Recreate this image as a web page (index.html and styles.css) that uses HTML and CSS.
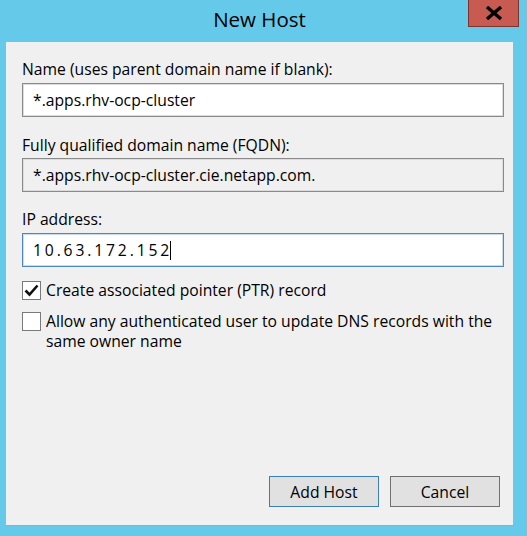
FILE: index.html
```html
<!DOCTYPE html>
<html>
<head>
<meta charset="utf-8">
<link rel="stylesheet" href="styles.css">
</head>
<body>
<div class="window">
  <div class="titlebar">
    <div class="title">New Host</div>
    <div class="close">
      <svg width="20" height="14" viewBox="0 0 20 14"><path d="M3 1 L17 13 M17 1 L3 13" stroke="#000" stroke-width="3.4" fill="none"/></svg>
    </div>
  </div>
  <div class="client">
    <div class="label l1">Name (uses parent domain name if blank):</div>
    <div class="input">*.apps.rhv-ocp-cluster</div>
    <div class="label l2">Fully qualified domain name (FQDN):</div>
    <div class="input readonly">*.apps.rhv-ocp-cluster.cie.netapp.com.</div>
    <div class="label l3">IP address:</div>
    <div class="input focused"><span class="ip">10.63.172.152</span><span class="caret"></span></div>
    <div class="check c1">
      <span class="box"><svg width="15" height="13" viewBox="0 0 15 13"><path d="M1.5 6.5 L5.5 10.5 L13.5 1.5" stroke="#111" stroke-width="2.6" fill="none"/></svg></span>
      <span class="ctext">Create associated pointer (PTR) record</span>
    </div>
    <div class="check c2">
      <span class="box"></span>
      <span class="ctext">Allow any authenticated user to update DNS records with the<br>same owner name</span>
    </div>
    <div class="buttons">
      <div class="btn default">Add Host</div>
      <div class="btn">Cancel</div>
    </div>
  </div>
</div>
</body>
</html>
```
FILE: styles.css
```css
html, body {
  margin: 0;
  padding: 0;
  width: 527px;
  height: 536px;
  overflow: hidden;
  background: #65c9ea;
  font-family: "Open Sans", "Noto Sans", sans-serif;
  color: #000;
}
.window {
  display: flex;
  flex-direction: column;
  height: 536px;
}
.titlebar {
  position: relative;
  height: 42px;
  display: flex;
  justify-content: center;
}
.title {
  font-size: 20.5px;
  line-height: 20px;
  margin-top: 9px;
  margin-left: -8px;
  color: #000;
}
.close {
  position: absolute;
  left: 468px;
  top: 0;
  width: 49px;
  height: 26px;
  background: #c75a51;
  border: 1px solid #7a3530;
  border-top: none;
  display: flex;
  align-items: center;
  justify-content: center;
}
.client {
  margin: 0 14px 0 6px;
  height: 483px;
  background: #f0f0f0;
  box-shadow: 0 1px 0 #a8a8a8;
  padding: 0 9px 0 16px;
  display: flex;
  flex-direction: column;
  font-size: 15.7px;
}
.label {
  line-height: 20px;
  height: 20px;
}
.l1 { margin-top: 17px; margin-bottom: 4px; }
.l2 { margin-top: 18px; margin-bottom: 3px; }
.l3 { margin-top: 17px; margin-bottom: 4px; }
.input {
  height: 32px;
  border: 1px solid #8a8a8a;
  box-shadow: inset 0 0 0 1px #dcdcdc;
  background: #fff;
  padding-left: 10px;
  line-height: 31px;
  display: flex;
  align-items: center;
}
.input.readonly {
  background: #f0f0f0;
}
.input.focused {
  border-color: #4f87bf;
  box-shadow: inset 0 0 0 1px #c8dbef;
}
.ip {
  letter-spacing: 2.85px;
  margin-right: -2.85px;
}
.caret {
  display: inline-block;
  width: 1px;
  height: 19px;
  background: #000;
  margin-left: 1px;
}
.check {
  display: flex;
  align-items: flex-start;
  line-height: 20px;
}
.c1 { margin-top: 14px; }
.c2 { margin-top: 12px; }
.box {
  flex: none;
  width: 17px;
  height: 17px;
  border: 1px solid #7a7a7a;
  background: #fff;
  margin-right: 5px;
  display: flex;
  align-items: center;
  justify-content: center;
}
.ctext {
  margin-top: -1px;
}
.buttons {
  margin-top: auto;
  margin-bottom: 18px;
  display: flex;
  justify-content: flex-end;
  gap: 11px;
  padding-right: 4px;
}
.btn {
  width: 108px;
  height: 29px;
  border: 1px solid #adadad;
  background: #e1e1e1;
  display: flex;
  align-items: center;
  justify-content: center;
  box-shadow: inset 0 0 0 1px #e1e1e1;
  outline: 1px solid #707070;
  outline-offset: -1px;
}
.btn.default {
  outline-color: #3c7fb1;
}
```
